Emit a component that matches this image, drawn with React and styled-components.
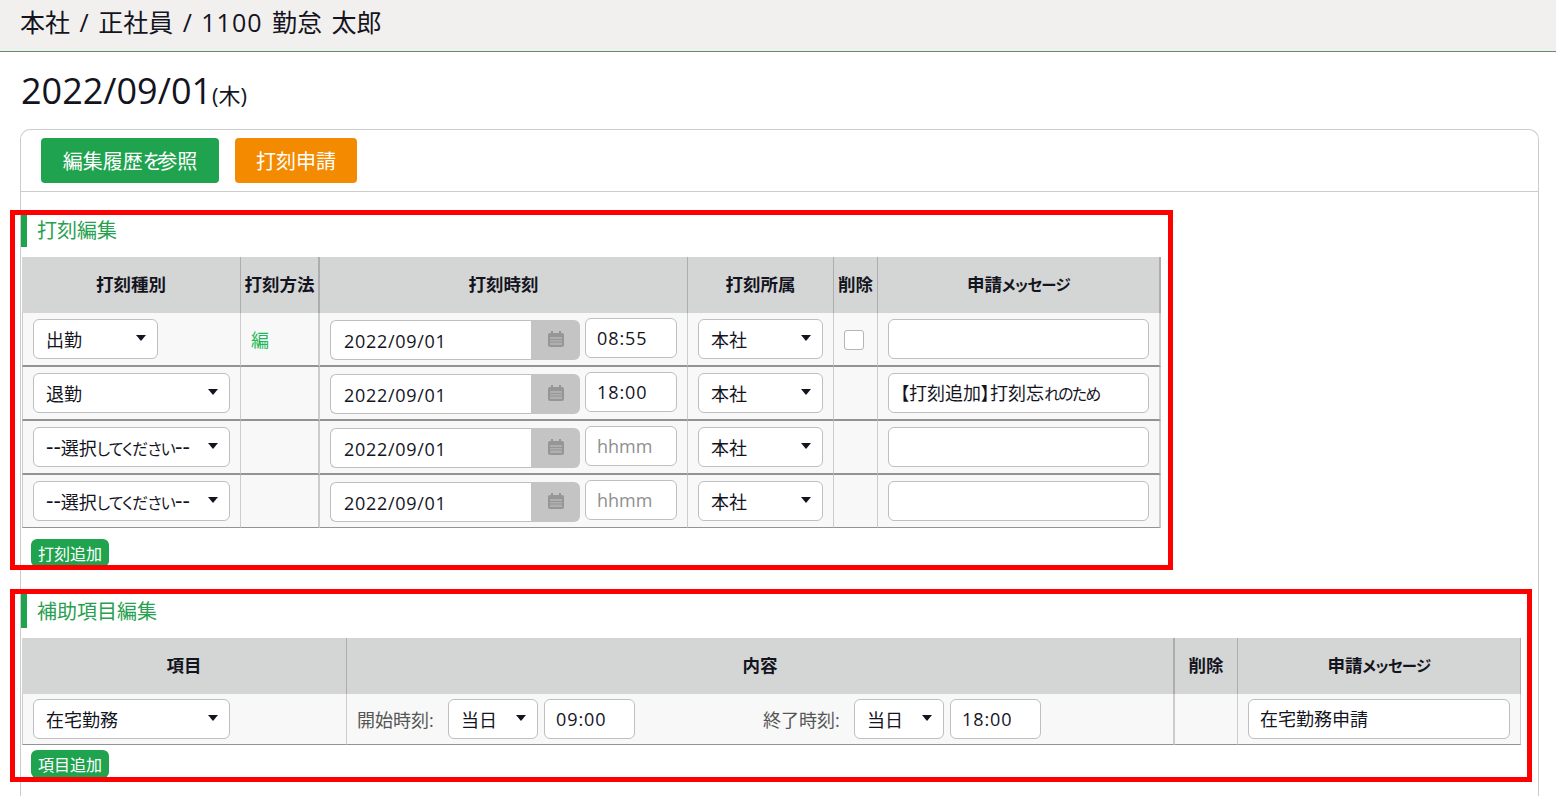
import React from 'react';
import styled, { createGlobalStyle } from 'styled-components';

const GlobalStyle = createGlobalStyle`
  html, body {
    margin: 0;
    height: 796px;
    overflow: hidden;
    background: #ffffff;
  }
  body {
    font-family: "Open Sans", "Noto Sans CJK JP", sans-serif;
    font-feature-settings: "palt";
    color: #14141e;
  }
  * {
    box-sizing: border-box;
  }
`;

const TopBar = styled.header`
  height: 52px;
  padding: 5px 20px 0;
  background: #f2f0ee;
  border-bottom: 1px solid #5c8f70;
  font-size: 25px;
  line-height: 34px;
  word-spacing: 3px;
`;

const Digits = styled.span`
  letter-spacing: 1px;
`;

const Kana = styled.span`
  font-size: 0.88em;
  letter-spacing: ${(p) => p.$squeeze ?? -0.05}em;
`;

const Dashes = styled.span`
  font-size: 23px;
  line-height: 0;
`;

const ButtonKana = styled.span`
  letter-spacing: -0.2em;
`;

const DateTitle = styled.h1`
  margin: 0;
  padding: 15px 21px 0;
  height: 77px;
  font-size: 36px;
  line-height: 48px;
  font-weight: 400;

  small {
    font-size: 22px;
  }
`;

const Card = styled.div`
  margin: 0 17px 0 20px;
  height: 667px;
  border: 1px solid #cccccc;
  border-bottom: none;
  border-radius: 10px 10px 0 0;
`;

const CardHead = styled.div`
  display: flex;
  gap: 16px;
  height: 62px;
  padding: 8px 20px 0;
  border-bottom: 1px solid #cccccc;
`;

const ActionButton = styled.button`
  width: ${(p) => p.$width}px;
  height: 45px;
  padding: 0;
  border: none;
  border-radius: 4px;
  background: ${(p) => p.$color};
  color: #ffffff;
  font: inherit;
  font-feature-settings: "palt";
  font-size: 20px;
`;

const Section = styled.section`
  position: relative;
  height: ${(p) => p.$height}px;
  margin-top: ${(p) => p.$top}px;
`;

const Highlight = styled.div`
  position: absolute;
  top: -5px;
  left: -11px;
  width: ${(p) => p.$width}px;
  height: ${(p) => p.$height}px;
  border: 5px solid #ff0000;
  pointer-events: none;
`;

const SectionTitle = styled.h2`
  height: ${(p) => p.$height}px;
  margin: 0;
  padding-left: 10px;
  border-left: 6px solid #1fa34e;
  color: #27a050;
  font-size: 20px;
  line-height: ${(p) => p.$lineHeight}px;
  font-weight: 400;
`;

const Table = styled.table`
  width: ${(p) => p.$width}px;
  margin: ${(p) => p.$top}px 0 0 1px;
  border-collapse: separate;
  border-spacing: 0;
  table-layout: fixed;
`;

const HeadCell = styled.th`
  width: ${(p) => p.$width}px;
  height: 56px;
  padding: 0 0 4px;
  background: #d4d6d5;
  border-right: ${(p) => (p.$thick ? 2 : 1)}px solid #adadad;
  font-size: 17.5px;
  font-weight: 700;
  text-align: center;
`;

const BodyCell = styled.td`
  height: ${(p) => (p.$height ? p.$height : 54)}px;
  padding: 0 0 0 10px;
  background: #f8f8f8;
  border-right: ${(p) => (p.$thick ? 2 : 1)}px solid #cccccc;
  border-bottom: ${(p) => (p.$height ? 1 : 2)}px solid #939393;
  vertical-align: middle;

  &:first-child {
    border-left: 1px solid #cccccc;
  }
`;

const CellRow = styled.div`
  display: flex;
  align-items: flex-start;
  gap: 5px;
`;

const SelectBox = styled.div`
  position: relative;
  flex: none;
  width: ${(p) => p.$width}px;
  height: 40px;
  padding-left: 12px;
  background: #ffffff;
  border: 1px solid #bfbfbf;
  border-radius: 6px;
  font-size: 18px;
  line-height: 40px;

  &::after {
    content: '';
    position: absolute;
    top: 15px;
    right: 11px;
    border-style: solid;
    border-width: 6px 5px 0;
    border-color: #14141e transparent transparent;
  }
`;

const TextField = styled.div`
  flex: none;
  width: ${(p) => p.$width}px;
  height: 40px;
  padding-left: 11px;
  background: #ffffff;
  border: 1px solid #bfbfbf;
  border-radius: 6px;
  color: ${(p) => (p.$placeholder ? '#8f8f8f' : '#14141e')};
  font-size: 18px;
  line-height: 38px;
  letter-spacing: ${(p) => (p.$numeric ? 0.9 : 0)}px;
`;

const DateGroup = styled.div`
  display: flex;
  flex: none;
  width: 250px;
  height: 40px;
  margin-top: 2px;
`;

const DateText = styled.div`
  flex: 1;
  padding-left: 13px;
  background: #ffffff;
  border: 1px solid #bfbfbf;
  border-right: none;
  border-radius: 6px 0 0 6px;
  font-size: 18px;
  line-height: 41px;
  letter-spacing: 0.7px;
`;

const DateAddon = styled.div`
  display: flex;
  align-items: center;
  justify-content: center;
  width: 49px;
  padding-bottom: 2px;
  background: #c4c4c4;
  border-radius: 0 6px 6px 0;
`;

const CheckBox = styled.div`
  width: 20px;
  height: 20px;
  margin-top: 1px;
  background: #ffffff;
  border: 1px solid #b5b5b5;
  border-radius: 3px;
`;

const MethodMark = styled.span`
  color: #1fb85a;
  font-size: 18px;
`;

const AddButton = styled.button`
  display: block;
  width: 78px;
  height: 28px;
  margin: ${(p) => p.$top}px 0 0 10px;
  padding: 0;
  border: none;
  border-radius: 6px;
  background: #1fa34e;
  color: #ffffff;
  font: inherit;
  font-feature-settings: "palt";
  font-size: 16px;
`;

const FieldGroup = styled.div`
  display: flex;
  align-items: center;
  gap: 6px;
  flex: none;
  width: ${(p) => p.$width}px;
`;

const FieldLabel = styled.span`
  width: 85px;
  flex: none;
  color: #555555;
  font-size: 18px;
`;

const InlineRow = styled.div`
  display: flex;
`;

const CalendarIcon = () => (
  <svg width="18" height="18" viewBox="0 0 18 18">
    <rect x="1" y="3" width="16" height="14" rx="2" fill="#969696" />
    <path d="M4 1h2v3H4zM12 1h2v3h-2z" fill="#969696" />
    <rect x="3" y="7" width="12" height="8" fill="#afafaf" />
    <path d="M3 9h12v1H3zM3 11.5h12v1H3z" fill="#969696" />
  </svg>
);

const SELECT_PROMPT = (
  <>
    <Dashes>--</Dashes>選択<Kana>してください</Kana><Dashes>--</Dashes>
  </>
);

const MESSAGE_LABEL = (
  <>
    申請<Kana $squeeze={-0.04}>メッセージ</Kana>
  </>
);

const punchRows = [
  { type: '出勤', typeWidth: 125, method: '編', time: '08:55', check: true },
  {
    type: '退勤',
    typeWidth: 197,
    time: '18:00',
    message: (
      <>
        【打刻追加】打刻忘<Kana $squeeze={-0.1}>れのため</Kana>
      </>
    ),
  },
  { type: SELECT_PROMPT, typeWidth: 197 },
  { type: SELECT_PROMPT, typeWidth: 197 },
];

function PunchRow({ row, last }) {
  const height = last ? 53 : undefined;
  return (
    <tr>
      <BodyCell $height={height}>
        <SelectBox $width={row.typeWidth}>{row.type}</SelectBox>
      </BodyCell>
      <BodyCell $height={height} $thick>
        {row.method && <MethodMark>{row.method}</MethodMark>}
      </BodyCell>
      <BodyCell $height={height}>
        <CellRow>
          <DateGroup>
            <DateText>2022/09/01</DateText>
            <DateAddon>
              <CalendarIcon />
            </DateAddon>
          </DateGroup>
          <TextField $width={92} $placeholder={!row.time} $numeric={!!row.time}>
            {row.time || 'hhmm'}
          </TextField>
        </CellRow>
      </BodyCell>
      <BodyCell $height={height}>
        <SelectBox $width={125}>本社</SelectBox>
      </BodyCell>
      <BodyCell $height={height}>{row.check && <CheckBox />}</BodyCell>
      <BodyCell $height={height} $thick>
        <TextField $width={261}>{row.message}</TextField>
      </BodyCell>
    </tr>
  );
}

function App() {
  return (
    <>
      <GlobalStyle />
      <TopBar>
        本社 / 正社員 / <Digits>1100</Digits> 勤怠 太郎
      </TopBar>
      <DateTitle>
        2022/09/01<small>(木)</small>
      </DateTitle>
      <Card>
        <CardHead>
          <ActionButton $width={178} $color="#1fa34e">
            編集履歴<ButtonKana>を</ButtonKana>参照
          </ActionButton>
          <ActionButton $width={122} $color="#f38a00">打刻申請</ActionButton>
        </CardHead>

        <Section $top={23} $height={350}>
          <Highlight $width={1163} $height={360} />
          <SectionTitle $height={32} $lineHeight={32}>打刻編集</SectionTitle>
          <Table $width={1139} $top={10}>
            <thead>
              <tr>
                <HeadCell $width={219}>打刻種別</HeadCell>
                <HeadCell $width={79} $thick>打刻方法</HeadCell>
                <HeadCell $width={368}>打刻時刻</HeadCell>
                <HeadCell $width={146}>打刻所属</HeadCell>
                <HeadCell $width={44}>削除</HeadCell>
                <HeadCell $width={283} $thick>{MESSAGE_LABEL}</HeadCell>
              </tr>
            </thead>
            <tbody>
              {punchRows.map((row, i) => (
                <PunchRow key={i} row={row} last={i === punchRows.length - 1} />
              ))}
            </tbody>
          </Table>
          <AddButton $top={11}>打刻追加</AddButton>
        </Section>

        <Section $top={29} $height={183}>
          <Highlight $width={1522} $height={193} />
          <SectionTitle $height={34} $lineHeight={36}>補助項目編集</SectionTitle>
          <Table $width={1499} $top={10}>
            <thead>
              <tr>
                <HeadCell $width={325}>項目</HeadCell>
                <HeadCell $width={828} $thick>内容</HeadCell>
                <HeadCell $width={63}>削除</HeadCell>
                <HeadCell $width={283}>{MESSAGE_LABEL}</HeadCell>
              </tr>
            </thead>
            <tbody>
              <tr>
                <BodyCell $height={51}>
                  <SelectBox $width={197}>在宅勤務</SelectBox>
                </BodyCell>
                <BodyCell $height={51} $thick>
                  <InlineRow>
                    <FieldGroup $width={406}>
                      <FieldLabel>開始時刻:</FieldLabel>
                      <SelectBox $width={90}>当日</SelectBox>
                      <TextField $width={91} $numeric>09:00</TextField>
                    </FieldGroup>
                    <FieldGroup $width={400}>
                      <FieldLabel>終了時刻:</FieldLabel>
                      <SelectBox $width={90}>当日</SelectBox>
                      <TextField $width={91} $numeric>18:00</TextField>
                    </FieldGroup>
                  </InlineRow>
                </BodyCell>
                <BodyCell $height={51} />
                <BodyCell $height={51}>
                  <TextField $width={262}>在宅勤務申請</TextField>
                </BodyCell>
              </tr>
            </tbody>
          </Table>
          <AddButton $top={5}>項目追加</AddButton>
        </Section>
      </Card>
    </>
  );
}

export default App;
